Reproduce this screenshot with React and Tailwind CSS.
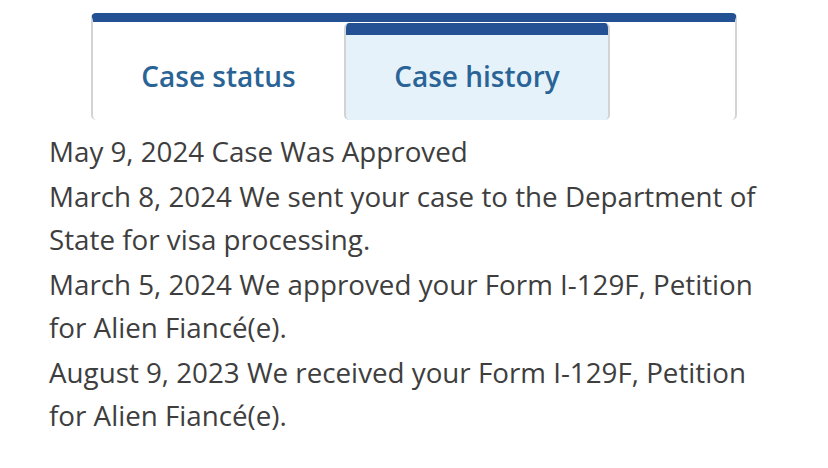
import React from "react";

const HISTORY = [
  "May 9, 2024 Case Was Approved",
  "March 8, 2024 We sent your case to the Department of State for visa processing.",
  "March 5, 2024 We approved your Form I-129F, Petition for Alien Fiancé(e).",
  "August 9, 2023 We received your Form I-129F, Petition for Alien Fiancé(e).",
];

export default function App() {
  return (
    <div
      className="w-[828px] h-[468px] bg-white overflow-hidden"
      style={{ fontFamily: "'Open Sans', sans-serif" }}
    >
      {/* Tabs */}
      <div className="pt-[13px] pl-[91px]">
        <div className="w-[646px] h-[107px] flex rounded-[5px] border-t-[9px] border-x-2 border-[#d3d3d3] border-t-[#245193]">
          <div className="w-[251px] flex items-center justify-center pt-[10px] text-[28px] font-semibold text-[#2a6496]">
            Case status
          </div>
          <div className="w-[266px] mt-[1px] flex flex-col rounded-[5px] overflow-hidden border-x-2 border-[#d3d3d3] bg-[#e6f2fa]">
            <div className="h-[12px] bg-[#245193]" />
            <div className="flex-1 flex items-center justify-center pb-[4px] text-[28px] font-semibold text-[#2a6496]">
              Case history
            </div>
          </div>
        </div>
      </div>

      {/* History list */}
      <div className="mt-[10px] pl-[49px] w-[779px] flex flex-col gap-[2px] text-[27.75px] leading-[43px] text-[#3e3e3e]">
        {HISTORY.map((line) => (
          <p key={line}>{line}</p>
        ))}
      </div>
    </div>
  );
}
